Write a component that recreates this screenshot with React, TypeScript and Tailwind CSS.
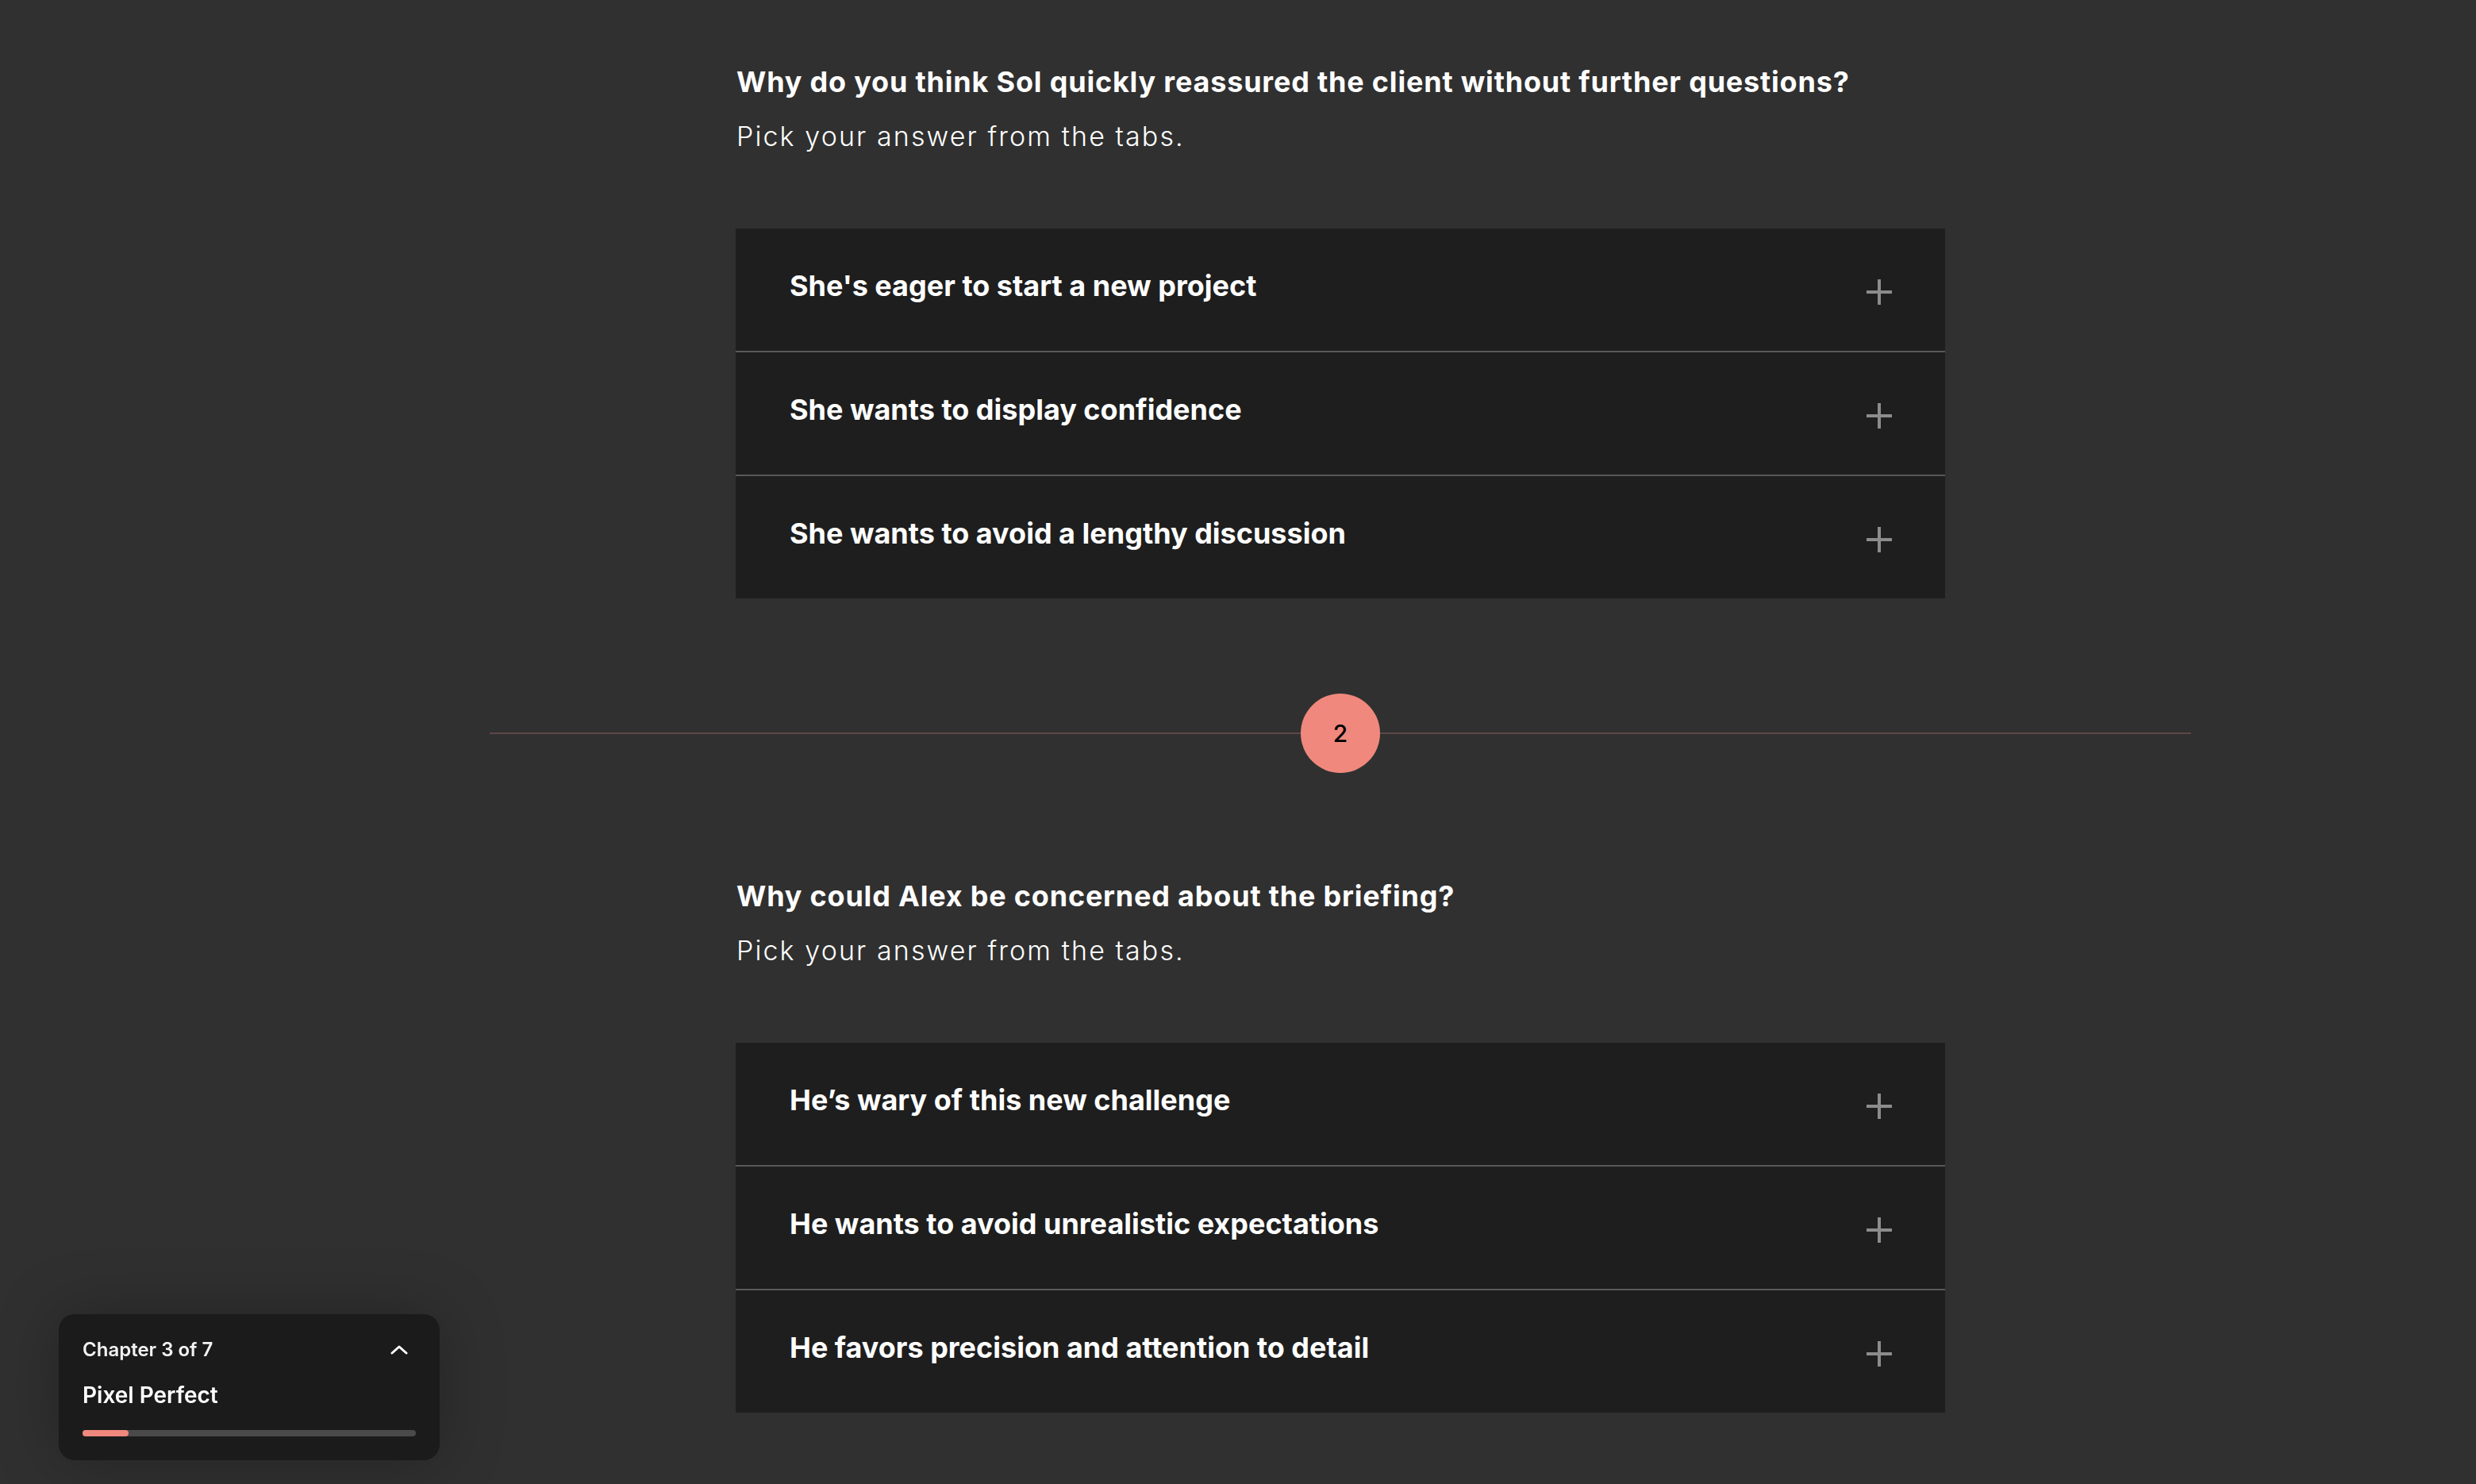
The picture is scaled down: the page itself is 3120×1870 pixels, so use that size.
import React from "react";

const font = { fontFamily: "Inter, 'Noto Sans', sans-serif" };

function PlusIcon() {
  return (
    <svg width="32" height="32" viewBox="0 0 32 32" className="shrink-0">
      <rect x="14" y="0" width="4" height="32" fill="#8c8c8c" />
      <rect x="0" y="14" width="32" height="4" fill="#8c8c8c" />
    </svg>
  );
}

function Row({ label }: { label: string }) {
  return (
    <div className="box-content flex h-[154px] items-center justify-between px-[68px]">
      <span className="pb-[10px] text-[36px] font-bold leading-[54px] tracking-[0px] text-white">
        {label}
      </span>
      <span className="mr-[-1px] pt-[6px]">
        <PlusIcon />
      </span>
    </div>
  );
}

function Section({ title, options }: { title: string; options: string[] }) {
  return (
    <div className="mx-auto w-[1524px]">
      <div className="pl-[1px]">
        <h2 className="text-[36px] font-bold leading-[54px] tracking-[0.8px] text-white">{title}</h2>
        <p className="mt-[18px] text-[34px] font-light leading-[48px] tracking-[2.1px] text-white">
          Pick your answer from the tabs.
        </p>
      </div>
      <div className="mt-[92px] divide-y-2 divide-[#585858] bg-[#1e1e1e]">
        {options.map((o) => (
          <Row key={o} label={o} />
        ))}
      </div>
    </div>
  );
}

export default function App() {
  return (
    <div style={font} className="relative h-[1870px] w-full overflow-hidden bg-[#303030]">
      <div className="pl-[258px] pt-[76px]">
        <div className="mx-auto w-[2144px]">
          <Section
            title="Why do you think Sol quickly reassured the client without further questions?"
            options={[
              "She's eager to start a new project",
              "She wants to display confidence",
              "She wants to avoid a lengthy discussion",
            ]}
          />
          <div className="mt-[120px] flex items-center">
            <div className="h-[2px] flex-1 bg-[#5e4748]" />
            <div className="flex h-[100px] w-[100px] items-center justify-center rounded-full bg-[#f0887d] text-[30px] font-medium text-black">
              2
            </div>
            <div className="h-[2px] flex-1 bg-[#5e4748]" />
          </div>
          <div className="mt-[128px]">
            <Section
              title="Why could Alex be concerned about the briefing?"
              options={[
                "He\u2019s wary of this new challenge",
                "He wants to avoid unrealistic expectations",
                "He favors precision and attention to detail",
              ]}
            />
          </div>
        </div>
      </div>

      <div className="fixed bottom-[30px] left-[74px] w-[480px] rounded-[20px] bg-[#1b1b1b] px-[30px] pb-[30px] pt-[31px] shadow-[0_0_80px_rgba(0,0,0,0.25)]">
        <div className="flex items-center justify-between">
          <span className="text-[24px] font-semibold leading-[28px] text-[#f2f2f2]">Chapter 3 of 7</span>
          <svg width="22" height="12" viewBox="0 0 22 12" className="mr-[10px]">
            <path d="M2 10 L11 2 L20 10" fill="none" stroke="#ffffff" strokeWidth="3" strokeLinecap="round" strokeLinejoin="round" />
          </svg>
        </div>
        <div className="mt-[26px] text-[28px] font-semibold leading-[34px] text-white">Pixel Perfect</div>
        <div className="mt-[27px] h-[8px] w-[420px] rounded-full bg-[#4a4a4a]">
          <div className="h-[8px] w-[58px] rounded-full bg-[#f0887d]" />
        </div>
      </div>
    </div>
  );
}
